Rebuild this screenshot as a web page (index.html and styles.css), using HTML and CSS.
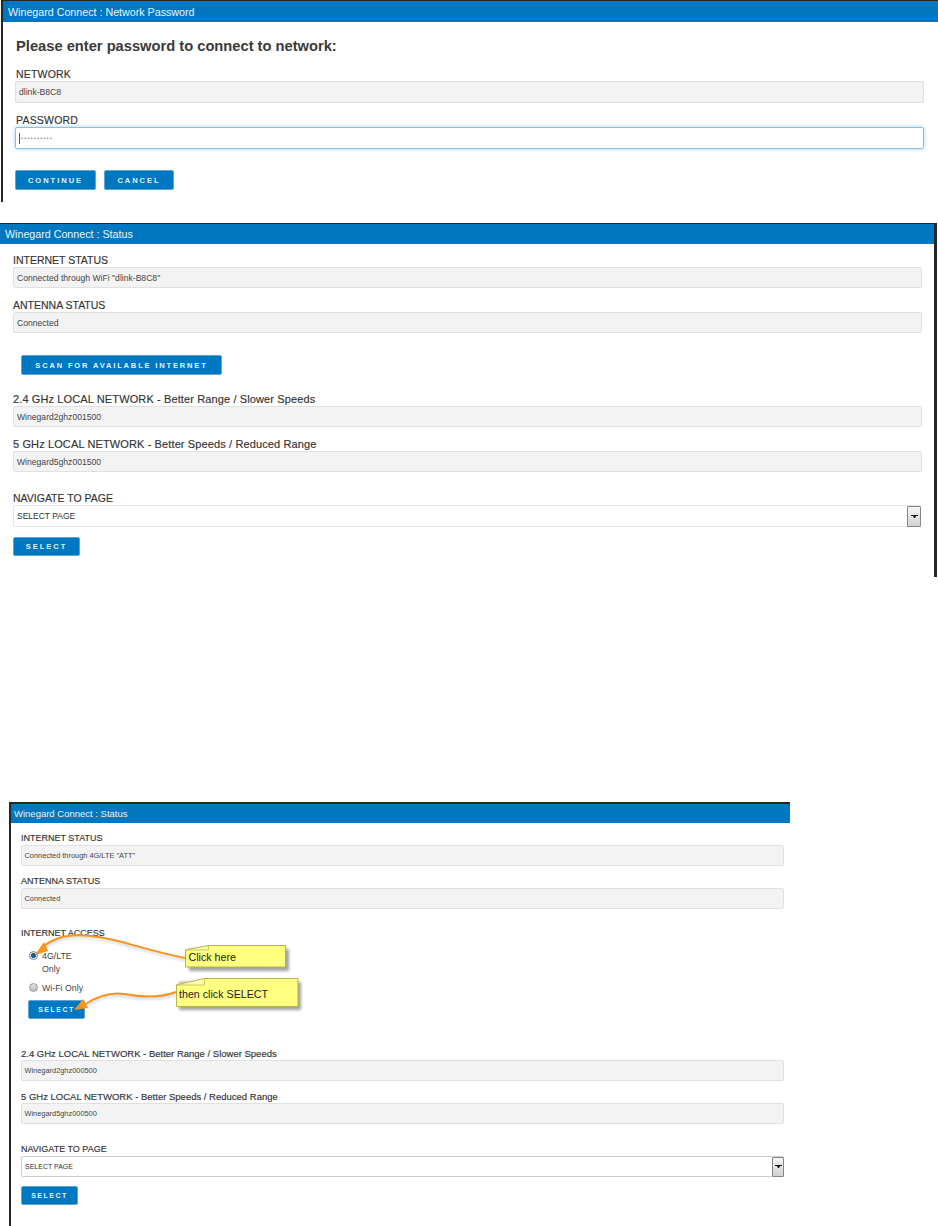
FILE: index.html
```html
<!DOCTYPE html>
<html lang="en">
<head>
<meta charset="utf-8">
<title>Winegard Connect</title>
<link rel="stylesheet" href="styles.css">
</head>
<body>
<section class="panel panel-password">
  <header class="bar">Winegard Connect : Network Password</header>
  <div class="content">
    <h1 class="heading">Please enter password to connect to network:</h1>
    <div class="group">
      <div class="label">NETWORK</div>
      <div class="field field-tall">dlink-B8C8</div>
    </div>
    <div class="group group-next">
      <div class="label">PASSWORD</div>
      <div class="field field-tall field-focus"><span class="caret"></span>••••••••••</div>
    </div>
    <div class="actions">
      <button class="btn btn-continue">CONTINUE</button>
      <button class="btn btn-cancel">CANCEL</button>
    </div>
  </div>
</section>

<section class="panel panel-status">
  <header class="bar">Winegard Connect : Status</header>
  <div class="content">
    <div class="group">
      <div class="label">INTERNET STATUS</div>
      <div class="field">Connected through WiFi "dlink-B8C8"</div>
    </div>
    <div class="group group-next">
      <div class="label">ANTENNA STATUS</div>
      <div class="field">Connected</div>
    </div>
    <button class="btn btn-scan">SCAN FOR AVAILABLE INTERNET</button>
    <div class="group group-after-scan">
      <div class="label label-long">2.4 GHz LOCAL NETWORK - Better Range / Slower Speeds</div>
      <div class="field">Winegard2ghz001500</div>
    </div>
    <div class="group group-next">
      <div class="label label-long">5 GHz LOCAL NETWORK - Better Speeds / Reduced Range</div>
      <div class="field">Winegard5ghz001500</div>
    </div>
    <div class="group group-nav">
      <div class="label">NAVIGATE TO PAGE</div>
      <div class="select">
        <span class="select-text">SELECT PAGE</span>
        <span class="select-btn"><svg width="7" height="3" viewBox="0 0 7 3"><path d="M0 0h7v1h-2l-1 2h-1l-1-2h-2z" fill="#111"/></svg></span>
      </div>
    </div>
    <button class="btn btn-select">SELECT</button>
  </div>
</section>

<section class="panel panel-access">
  <header class="bar">Winegard Connect : Status</header>
  <div class="content">
    <div class="group">
      <div class="label">INTERNET STATUS</div>
      <div class="field">Connected through 4G/LTE "ATT"</div>
    </div>
    <div class="group group-next">
      <div class="label">ANTENNA STATUS</div>
      <div class="field">Connected</div>
    </div>
    <div class="access">
      <div class="label">INTERNET ACCESS</div>
      <div class="radio-row">
        <span class="radio radio-on"></span>
        <span class="radio-text">4G/LTE<br>Only</span>
      </div>
      <div class="radio-row radio-row-2">
        <span class="radio"></span>
        <span class="radio-text">Wi-Fi Only</span>
      </div>
      <button class="btn btn-select btn-access">SELECT</button>
    </div>
    <div class="group group-after-access">
      <div class="label label-long">2.4 GHz LOCAL NETWORK - Better Range / Slower Speeds</div>
      <div class="field">Winegard2ghz000500</div>
    </div>
    <div class="group group-next">
      <div class="label label-long">5 GHz LOCAL NETWORK - Better Speeds / Reduced Range</div>
      <div class="field">Winegard5ghz000500</div>
    </div>
    <div class="group group-nav">
      <div class="label">NAVIGATE TO PAGE</div>
      <div class="select">
        <span class="select-text">SELECT PAGE</span>
        <span class="select-btn"><svg width="7" height="3" viewBox="0 0 7 3"><path d="M0 0h7v1h-2l-1 2h-1l-1-2h-2z" fill="#111"/></svg></span>
      </div>
    </div>
    <button class="btn btn-select">SELECT</button>
  </div>
  <svg class="annotations" width="320" height="240" viewBox="0 0 320 240">
    <defs>
      <filter id="soft" x="-20%" y="-30%" width="150%" height="170%">
        <feGaussianBlur stdDeviation="1.8"/>
      </filter>
    </defs>
    <!-- coordinates: x = page x, y = page y - 795 -->
    <rect class="note-shadow" x="189" y="154" width="100" height="22" filter="url(#soft)"/>
    <rect class="note-shadow" x="179" y="187" width="122" height="28" filter="url(#soft)"/>
    <path class="note" d="M185.5 155 L208.5 150.5 H285.5 V172 H185.5 Z"/>
    <path class="note-fold" d="M185.5 155 L208.5 150.5 V155 Z"/>
    <text class="note-text" x="188.5" y="165.5">Click here</text>
    <path class="note" d="M176.5 190 L204.5 183.5 H298 V211.5 H176.5 Z"/>
    <path class="note-fold" d="M176.5 190 L204.5 183.5 V190 Z"/>
    <text class="note-text" x="179" y="203">then click SELECT</text>

    <path class="arrow-shadow" d="M185 165 C160 160 140 154 122 149 C100 143 78 140 62 144 C52 147 46 151 42 155" filter="url(#soft)"/>
    <path class="arrow-shadow" d="M176 199 C160 205 140 204 124 201 C108 199 96 204 88 210" filter="url(#soft)"/>
    <path class="arrow" d="M185 163 C160 158 140 152 122 147 C100 141 78 138 62 142 C52 145 46 149 41 153"/>
    <path class="arrow-head" d="M35 160 L44 147 L48 156 Z"/>
    <path class="arrow" d="M176 197 C160 203 140 202 124 199 C108 197 96 202 84 210"/>
    <path class="arrow-head" d="M74 215 L83 204 L88 213 Z"/>
  </svg>
</section>
</body>
</html>
```
FILE: styles.css
```css
* { box-sizing: border-box; }
html, body { margin: 0; padding: 0; background: #fff; }
body {
  width: 938px;
  height: 1226px;
  overflow: hidden;
  font-family: "Liberation Sans", Arial, sans-serif;
  color: #333;
}
.panel { background: #fff; border-top: 1px solid #262626; }
.bar {
  background: #0078c1;
  color: #eaf4fb;
  font-size: 10.7px;
  display: flex;
  align-items: center;
}

/* Panel 1 */
.panel-password {
  margin-left: 1px;
  width: 937px;
  height: 202px;
  border-left: 2px solid #262626;
}
.panel-password .bar { height: 21px; padding-left: 5px; }
.panel-password .content { padding: 16px 14px 0 12px; }
.heading {
  margin: 0 0 14px 1px;
  font-size: 14.7px;
  line-height: 16px;
  font-weight: 700;
  color: #3a3a3a;
}

/* Panel 2 */
.panel-status {
  margin-top: 21px;
  width: 937px;
  height: 354px;
  border-right: 3px solid #262626;
}
.panel-status .bar { height: 20px; padding-left: 5px; }
.panel-status .content { padding: 10px 12px 0 13px; }

/* Panel 3 */
.panel-access {
  position: relative;
  margin-top: 225px;
  margin-left: 9px;
  width: 781px;
  height: 424px;
  border-top-width: 2px;
  border-left: 2px solid #262626;
}
.panel-access .bar { height: 19px; padding-left: 3px; font-size: 9.5px; }
.panel-access .content { padding: 9px 6px 0 10px; }

/* Fields */
.label {
  font-size: 10.5px;
  line-height: 13px;
  color: #333;
  white-space: nowrap;
  -webkit-text-stroke: 0.15px #333;
}
.panel-password .label { letter-spacing: 0.2px; margin-left: 1px; }
.label-long { font-size: 11px; letter-spacing: 0.12px; }
.panel-access .label { font-size: 9px; line-height: 13px; }
.panel-access .label-long { font-size: 9.5px; letter-spacing: 0; }
.field {
  height: 21px;
  display: flex;
  align-items: center;
  padding: 0 3px;
  background: #f3f3f3;
  border: 1px solid #e0e0e0;
  border-radius: 2px;
  font-size: 8.6px;
  color: #444;
}
.panel-access .field { font-size: 7.4px; padding: 0 2.5px; }
.field-tall { height: 22px; }
.field-focus {
  background: #fff;
  border-color: #8cc0ea;
  box-shadow: 0 0 4px #a9d2f2;
  color: #8a8a8a;
  letter-spacing: 1.1px;
  font-size: 6px;
}
.caret { width: 1px; height: 11px; background: #555; margin-right: 1px; }
.group-next { margin-top: 11px; }
.group-after-scan { margin-top: 18px; }
.group-nav { margin-top: 20px; }

/* Select */
.select {
  height: 22px;
  width: 908px;
  display: flex;
  align-items: center;
  justify-content: space-between;
  padding-left: 3px;
  background: #fff;
  border: 1px solid #e2e2e2;
  border-radius: 2px;
  font-size: 8.5px;
  color: #333;
}
.panel-access .select { width: 763px; height: 21px; border-color: #ccc; font-size: 7px; }
.select-btn {
  width: 14px;
  height: 21px;
  margin-right: -1px;
  display: flex;
  align-items: center;
  justify-content: center;
  background: linear-gradient(#f6f6f6, #d2d2d2);
  border: 1px solid #858585;
  border-radius: 1px;
}
.panel-access .select-btn { width: 12px; height: 20px; }

/* Buttons */
.btn {
  display: block;
  padding: 0;
  background: #0078c1;
  border: 1px solid #5fa3d1;
  border-radius: 2px;
  color: #e8f3fa;
  font-family: inherit;
  font-size: 7.5px;
  font-weight: 700;
  letter-spacing: 2px;
  text-align: center;
}
.actions { display: flex; gap: 8px; margin-top: 21px; }
.btn-continue { width: 81px; height: 20px; }
.btn-cancel { width: 70px; height: 20px; }
.btn-scan { margin: 22px 0 0 8px; width: 201px; height: 20px; letter-spacing: 1.85px; }
.btn-select { margin-top: 10px; width: 67px; height: 19px; }
.panel-access .btn-select { width: 57px; margin-top: 9px; }
.panel-access .btn { font-size: 7px; letter-spacing: 1.5px; }

/* Internet access */
.access { margin-top: 18px; }
.radio-row { display: flex; margin: 10px 0 0 8px; align-items: flex-start; }
.radio-row-2 { margin-top: 6px; }
.radio {
  width: 9px;
  height: 9px;
  margin: 1px 4px 0 0;
  flex: none;
  border-radius: 50%;
  background: linear-gradient(#e4e4e4, #bdbdbd);
  border: 1px solid #999;
}
.radio-on {
  background: radial-gradient(circle, #1f5c91 0 45%, #dfe8ef 50%);
  border-color: #7d8b98;
}
.radio-text { font-size: 8.8px; line-height: 13px; color: #444; }
.panel-access .btn-access { margin: 5px 0 0 7px; height: 19px; }
.group-after-access { margin-top: 28px; }
.panel-access .group-next { margin-top: 9px; }
.panel-access .group-nav { margin-top: 19px; }

/* Callouts */
.annotations { position: absolute; left: -11px; top: -9px; overflow: visible; pointer-events: none; }
.note { fill: #ffff80; stroke: #b5b54a; stroke-width: 1; }
.note-fold { fill: #fdfdb0; stroke: #b5b54a; stroke-width: 0.7; }
.note-shadow { fill: #555; opacity: 0.55; }
.note-text { font-family: "Liberation Sans", Arial, sans-serif; font-size: 10.7px; fill: #222; }
.arrow { fill: none; stroke: #f7941d; stroke-width: 2; }
.arrow-shadow { fill: none; stroke: #777; stroke-width: 1.4; opacity: 0.5; }
.arrow-head { fill: #f7941d; }
```
